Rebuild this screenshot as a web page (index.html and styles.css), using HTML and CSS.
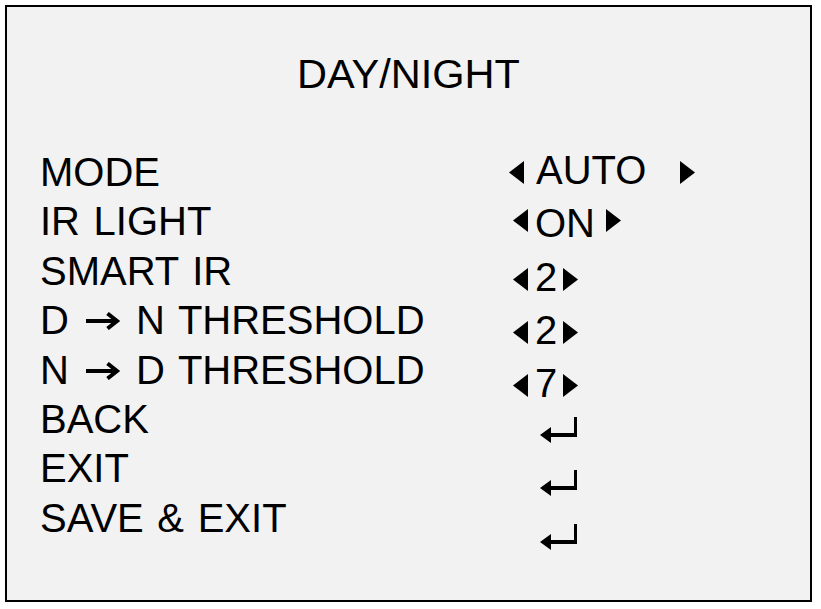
FILE: index.html
```html
<!DOCTYPE html>
<html lang="en">
<head>
<meta charset="utf-8">
<title>DAY/NIGHT</title>
<link rel="stylesheet" href="styles.css">
</head>
<body>
<div class="frame">
  <h1 class="title">DAY/NIGHT</h1>
  <div class="menu">
    <ul class="labels">
      <li>MODE</li>
      <li>IR LIGHT</li>
      <li>SMART IR</li>
      <li>D <svg class="arrow" width="40" height="18" viewBox="0 0 40 18" role="img" aria-label="→"><path d="M3 9H34M24.5 1.5L34 9L24.5 16.5" fill="none" stroke="#000" stroke-width="4" stroke-linejoin="miter"/></svg> N THRESHOLD</li>
      <li>N <svg class="arrow" width="40" height="18" viewBox="0 0 40 18" role="img" aria-label="→"><path d="M3 9H34M24.5 1.5L34 9L24.5 16.5" fill="none" stroke="#000" stroke-width="4" stroke-linejoin="miter"/></svg> D THRESHOLD</li>
      <li>BACK</li>
      <li>EXIT</li>
      <li>SAVE &amp; EXIT</li>
    </ul>
    <ul class="values">
      <li class="vrow row-auto">
        <svg class="tri tri-l" width="15" height="23" viewBox="0 0 15 23"><polygon points="15,0 15,23 0,11.5" fill="#000"/></svg>
        <span class="val">AUTO</span>
        <svg class="tri tri-r" width="15" height="23" viewBox="0 0 15 23"><polygon points="0,0 15,11.5 0,23" fill="#000"/></svg>
      </li>
      <li class="vrow row-on">
        <svg class="tri tri-l" width="15" height="23" viewBox="0 0 15 23"><polygon points="15,0 15,23 0,11.5" fill="#000"/></svg>
        <span class="val">ON</span>
        <svg class="tri tri-r" width="15" height="23" viewBox="0 0 15 23"><polygon points="0,0 15,11.5 0,23" fill="#000"/></svg>
      </li>
      <li class="vrow">
        <svg class="tri tri-l" width="15" height="23" viewBox="0 0 15 23"><polygon points="15,0 15,23 0,11.5" fill="#000"/></svg>
        <span class="val">2</span>
        <svg class="tri tri-r" width="15" height="23" viewBox="0 0 15 23"><polygon points="0,0 15,11.5 0,23" fill="#000"/></svg>
      </li>
      <li class="vrow">
        <svg class="tri tri-l" width="15" height="23" viewBox="0 0 15 23"><polygon points="15,0 15,23 0,11.5" fill="#000"/></svg>
        <span class="val">2</span>
        <svg class="tri tri-r" width="15" height="23" viewBox="0 0 15 23"><polygon points="0,0 15,11.5 0,23" fill="#000"/></svg>
      </li>
      <li class="vrow">
        <svg class="tri tri-l" width="15" height="23" viewBox="0 0 15 23"><polygon points="15,0 15,23 0,11.5" fill="#000"/></svg>
        <span class="val">7</span>
        <svg class="tri tri-r" width="15" height="23" viewBox="0 0 15 23"><polygon points="0,0 15,11.5 0,23" fill="#000"/></svg>
      </li>
      <li class="vrow erow">
        <svg class="enter" width="38" height="27" viewBox="0 0 38 27"><rect x="34" y="0" width="3" height="20" fill="#000"/><rect x="8" y="16" width="29" height="4" fill="#000"/><polygon points="0,18 11,10 11,26" fill="#000"/></svg>
      </li>
      <li class="vrow erow">
        <svg class="enter" width="38" height="27" viewBox="0 0 38 27"><rect x="34" y="0" width="3" height="20" fill="#000"/><rect x="8" y="16" width="29" height="4" fill="#000"/><polygon points="0,18 11,10 11,26" fill="#000"/></svg>
      </li>
      <li class="vrow erow">
        <svg class="enter" width="38" height="27" viewBox="0 0 38 27"><rect x="34" y="0" width="3" height="20" fill="#000"/><rect x="8" y="16" width="29" height="4" fill="#000"/><polygon points="0,18 11,10 11,26" fill="#000"/></svg>
      </li>
    </ul>
  </div>
</div>
</body>
</html>
```

FILE: styles.css
```css
html, body {
  margin: 0;
  padding: 0;
  background: #ffffff;
}

body {
  font-family: "Liberation Sans", Arial, sans-serif;
  color: #000;
}

.frame {
  box-sizing: border-box;
  width: 807px;
  height: 597px;
  margin: 5px 0 0 5px;
  border: 2px solid #000;
  box-shadow: 0 1px 0 #8a8a8a;
  background: #f2f2f2;
  padding-top: 43px;
}

.title {
  margin: 0;
  font-size: 41.5px;
  font-weight: normal;
  line-height: 48px;
  text-align: center;
}

.menu {
  display: grid;
  grid-template-columns: 502px 1fr;
  margin-top: 46px;
}

.labels,
.values {
  list-style: none;
  margin: 0;
  padding: 0;
}

.labels {
  padding-top: 4px;
  padding-left: 33px;
  font-size: 40px;
  line-height: 49.4px;
  word-spacing: 2.5px;
  white-space: nowrap;
}

.arrow {
  vertical-align: 4px;
}

.values {
  font-size: 40px;
  line-height: 53.3px;
}

.vrow {
  display: flex;
  align-items: center;
  height: 53.3px;
}

.tri {
  flex: none;
  margin-top: 4px;
}

.tri-l {
  margin-left: 4px;
}

.val {
  margin-left: 7px;
}

.tri-r {
  margin-left: 6px;
}

.row-auto .tri-l {
  margin-left: 0;
}

.row-auto .val {
  margin-left: 12px;
}

.row-auto .tri-r {
  margin-left: 34px;
}

.row-on .tri {
  margin-top: -6px;
}

.row-on .tri-r {
  margin-left: 11px;
}

.erow {
  align-items: flex-start;
  padding-top: 6.5px;
  box-sizing: border-box;
}

.enter {
  flex: none;
  margin-left: 31px;
}
```
